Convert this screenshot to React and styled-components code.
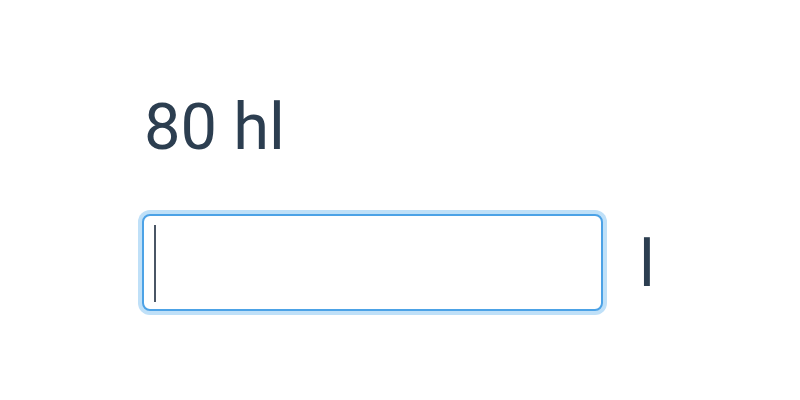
import React from "react";
import styled, { createGlobalStyle } from "styled-components";

const Global = createGlobalStyle`
  html, body { margin: 0; padding: 0; background: #ffffff; }
  body { font-family: Roboto, "Liberation Sans", Arial, sans-serif; color: #2c3e50; }
`;

const Page = styled.div`
  width: 800px;
  height: 400px;
  box-sizing: border-box;
  padding: 87px 0 0 142px;
  display: flex;
  flex-direction: column;
  gap: 47px;
`;

const Value = styled.div`
  font-size: 65px;
  line-height: 80px;
  height: 80px;
  margin-left: 2px;
  color: #2c3e50;
`;

const Row = styled.div`
  display: flex;
  align-items: center;
  gap: 36px;
`;

const Field = styled.div`
  position: relative;
  width: 461px;
  height: 97px;
  box-sizing: border-box;
  border: 2.5px solid #4ca2e6;
  border-radius: 8px;
  box-shadow: 0 0 0 4px #bfe0f8;
  background: #fff;
`;

const Input = styled.input`
  width: 100%;
  height: 100%;
  box-sizing: border-box;
  border: none;
  outline: none;
  background: transparent;
  padding: 0 12px;
  font: inherit;
  font-size: 65px;
  color: #2c3e50;
  caret-color: transparent;
`;

const Caret = styled.span`
  position: absolute;
  left: 10px;
  top: 8.5px;
  width: 2px;
  height: 77px;
  background: #4a5665;
`;

const Unit = styled.span`
  font-size: 65px;
  line-height: 80px;
  padding-top: 2px;
  color: #2c3e50;
`;

export default function App() {
  return (
    <>
      <Global />
      <Page>
        <Value>80 hl</Value>
        <Row>
          <Field>
            <Input type="text" defaultValue="" aria-label="Menge" />
            <Caret />
          </Field>
          <Unit>l</Unit>
        </Row>
      </Page>
    </>
  );
}
